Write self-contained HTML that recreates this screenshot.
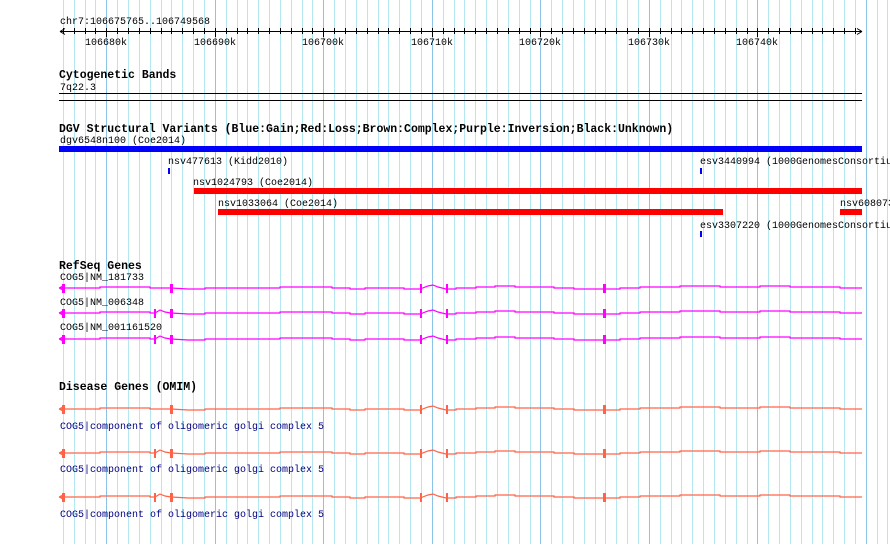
<!DOCTYPE html>
<html><head><meta charset="utf-8"><style>
html,body{margin:0;padding:0;background:#fff;}
svg text{font-family:"Liberation Mono","DejaVu Sans Mono",monospace;font-size:10px;}
.b{font-weight:bold;font-size:11.5px;}
</style></head><body>
<svg width="890" height="544" xmlns="http://www.w3.org/2000/svg">
<defs>
<g id="g1">
<path d="M60 0 L100 0 L100 -1 L150 -1 L150 0 L171 0 L188 1 L205 1 L205 0 L280 0 L280 -1 L332 -1 L332 0 L350 0 L350 1 L365 1 L365 0 L404 0 L404 1 L420 1 L428 -2 L433 -3 L438 -1 L446 1 L456 1 L456 0 L476 0 L476 -1 L495 -1 L495 -2 L515 -2 L515 -1 L554 -1 L554 0 L574 0 L574 1 L620 1 L620 0 L640 0 L640 -1 L680 -1 L680 -2 L720 -2 L720 -1 L760 -1 L760 -2 L790 -2 L790 -1 L840 -1 L840 0 L862 0 M59 0 l6 -3 M59 0 l6 3" stroke="currentColor" stroke-width="1.2" fill="none"/>
<rect x="62" y="-4" width="3" height="9" fill="currentColor"/>
<rect x="170" y="-4" width="3" height="9" fill="currentColor"/>
<rect x="420" y="-4" width="2" height="9" fill="currentColor"/>
<rect x="446" y="-4" width="2" height="9" fill="currentColor"/>
<rect x="603" y="-4" width="3" height="9" fill="currentColor"/>
</g>
<g id="g2">
<path d="M60 0 L100 0 L100 -1 L150 -1 L150 0 L155 0 L160 -3 L165 -1 L171 0 L188 1 L205 1 L205 0 L280 0 L280 -1 L332 -1 L332 0 L350 0 L350 1 L365 1 L365 0 L404 0 L404 1 L420 1 L428 -2 L433 -3 L438 -1 L446 1 L456 1 L456 0 L476 0 L476 -1 L495 -1 L495 -2 L515 -2 L515 -1 L554 -1 L554 0 L574 0 L574 1 L620 1 L620 0 L640 0 L640 -1 L680 -1 L680 -2 L720 -2 L720 -1 L760 -1 L760 -2 L790 -2 L790 -1 L840 -1 L840 0 L862 0 M59 0 l6 -3 M59 0 l6 3" stroke="currentColor" stroke-width="1.2" fill="none"/>
<rect x="62" y="-4" width="3" height="9" fill="currentColor"/>
<rect x="154" y="-4" width="2" height="9" fill="currentColor"/>
<rect x="170" y="-4" width="3" height="9" fill="currentColor"/>
<rect x="420" y="-4" width="2" height="9" fill="currentColor"/>
<rect x="446" y="-4" width="2" height="9" fill="currentColor"/>
<rect x="603" y="-4" width="3" height="9" fill="currentColor"/>
</g>
</defs>
<path stroke="#b4e8f0" stroke-width="1" fill="none" d="M63.5 0V544M74.5 0V544M85.5 0V544M95.5 0V544M117.5 0V544M128.5 0V544M139.5 0V544M150.5 0V544M161.5 0V544M171.5 0V544M182.5 0V544M193.5 0V544M204.5 0V544M226.5 0V544M237.5 0V544M247.5 0V544M258.5 0V544M269.5 0V544M280.5 0V544M291.5 0V544M302.5 0V544M312.5 0V544M334.5 0V544M345.5 0V544M356.5 0V544M367.5 0V544M378.5 0V544M388.5 0V544M399.5 0V544M410.5 0V544M421.5 0V544M443.5 0V544M454.5 0V544M464.5 0V544M475.5 0V544M486.5 0V544M497.5 0V544M508.5 0V544M519.5 0V544M530.5 0V544M551.5 0V544M562.5 0V544M573.5 0V544M584.5 0V544M595.5 0V544M605.5 0V544M616.5 0V544M627.5 0V544M638.5 0V544M660.5 0V544M671.5 0V544M681.5 0V544M692.5 0V544M703.5 0V544M714.5 0V544M725.5 0V544M736.5 0V544M747.5 0V544M768.5 0V544M779.5 0V544M790.5 0V544M801.5 0V544M812.5 0V544M822.5 0V544M833.5 0V544M844.5 0V544M855.5 0V544M877.5 0V544M887.5 0V544"/>
<path stroke="#8cc4e8" stroke-width="1" fill="none" d="M106.5 0V544M215.5 0V544M323.5 0V544M432.5 0V544M540.5 0V544M649.5 0V544M757.5 0V544M866.5 0V544"/>
<!-- ruler -->
<text x="60" y="24">chr7:106675765..106749568</text>
<line x1="60" y1="31.5" x2="862" y2="31.5" stroke="#000"/>
<path d="M60 31.5 l5 -3 M60 31.5 l5 3 M862 31.5 l-5 -3 M862 31.5 l-5 3" stroke="#000" fill="none"/>
<path stroke="#000" fill="none" d="M63.5 28V34M74.5 28V34M85.5 28V34M95.5 28V34M117.5 28V34M128.5 28V34M139.5 28V34M150.5 28V34M161.5 28V34M171.5 28V34M182.5 28V34M193.5 28V34M204.5 28V34M226.5 28V34M237.5 28V34M247.5 28V34M258.5 28V34M269.5 28V34M280.5 28V34M291.5 28V34M302.5 28V34M312.5 28V34M334.5 28V34M345.5 28V34M356.5 28V34M367.5 28V34M378.5 28V34M388.5 28V34M399.5 28V34M410.5 28V34M421.5 28V34M443.5 28V34M454.5 28V34M464.5 28V34M475.5 28V34M486.5 28V34M497.5 28V34M508.5 28V34M519.5 28V34M530.5 28V34M551.5 28V34M562.5 28V34M573.5 28V34M584.5 28V34M595.5 28V34M605.5 28V34M616.5 28V34M627.5 28V34M638.5 28V34M660.5 28V34M671.5 28V34M681.5 28V34M692.5 28V34M703.5 28V34M714.5 28V34M725.5 28V34M736.5 28V34M747.5 28V34M768.5 28V34M779.5 28V34M790.5 28V34M801.5 28V34M812.5 28V34M822.5 28V34M833.5 28V34M844.5 28V34M855.5 28V34M106.5 28V37M215.5 28V37M323.5 28V37M432.5 28V37M540.5 28V37M649.5 28V37M757.5 28V37"/>
<g text-anchor="middle">
<text x="106" y="45">106680k</text><text x="215" y="45">106690k</text><text x="323" y="45">106700k</text><text x="432" y="45">106710k</text><text x="540" y="45">106720k</text><text x="649" y="45">106730k</text><text x="757" y="45">106740k</text>
</g>
<!-- cytobands -->
<text class="b" x="59" y="78">Cytogenetic Bands</text>
<text x="60" y="90">7q22.3</text>
<line x1="59" y1="93.5" x2="862" y2="93.5" stroke="#000"/>
<line x1="59" y1="100.5" x2="862" y2="100.5" stroke="#000"/>
<!-- DGV -->
<text class="b" x="59" y="132">DGV Structural Variants (Blue:Gain;Red:Loss;Brown:Complex;Purple:Inversion;Black:Unknown)</text>
<text x="60" y="143">dgv6548n100 (Coe2014)</text>
<rect x="59" y="146" width="803" height="6" fill="#0000ff"/>
<text x="168" y="164">nsv477613 (Kidd2010)</text>
<rect x="168" y="168" width="2" height="6" fill="#0000ff"/>
<text x="700" y="164">esv3440994 (1000GenomesConsortium</text>
<rect x="700" y="168" width="2" height="6" fill="#0000ff"/>
<text x="193" y="185">nsv1024793 (Coe2014)</text>
<rect x="194" y="188" width="668" height="6" fill="#ff0000"/>
<text x="218" y="206">nsv1033064 (Coe2014)</text>
<rect x="218" y="209" width="505" height="6" fill="#ff0000"/>
<text x="840" y="206">nsv608073</text>
<rect x="840" y="209" width="22" height="6" fill="#ff0000"/>
<text x="700" y="228">esv3307220 (1000GenomesConsortium</text>
<rect x="700" y="231" width="2" height="6" fill="#0000ff"/>
<!-- RefSeq -->
<text class="b" x="59" y="269">RefSeq Genes</text>
<text x="60" y="280">COG5|NM_181733</text>
<use href="#g1" x="0" y="288" style="color:#ff00ff"/>
<text x="60" y="305">COG5|NM_006348</text>
<use href="#g2" x="0" y="313" style="color:#ff00ff"/>
<text x="60" y="330">COG5|NM_001161520</text>
<use href="#g2" x="0" y="339" style="color:#ff00ff"/>
<!-- Disease -->
<text class="b" x="59" y="390">Disease Genes (OMIM)</text>
<use href="#g1" x="0" y="409" style="color:#ff6347"/>
<text x="60" y="429" fill="#000080">COG5|component of oligomeric golgi complex 5</text>
<use href="#g2" x="0" y="453" style="color:#ff6347"/>
<text x="60" y="472" fill="#000080">COG5|component of oligomeric golgi complex 5</text>
<use href="#g2" x="0" y="497" style="color:#ff6347"/>
<text x="60" y="517" fill="#000080">COG5|component of oligomeric golgi complex 5</text>
</svg>
</body></html>
